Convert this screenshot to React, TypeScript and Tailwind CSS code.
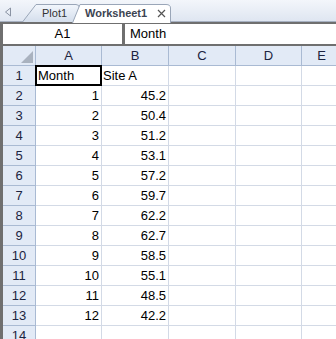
const values = [45.2, 50.4, 51.2, 53.1, 57.2, 59.7, 62.2, 62.7, 58.5, 55.1, 48.5, 42.2];

const cols = [
  { key: "A", w: "w-[66px]" },
  { key: "B", w: "w-[67px]" },
  { key: "C", w: "w-[67px]" },
  { key: "D", w: "w-[66px]" },
  { key: "E", w: "w-[40px]" },
];

const TabBar = () => (
  <div className="relative h-[22px] bg-gradient-to-b from-[#f3f6fb] to-[#dfe6f1] border-b border-[#a7b1c2]">
    <svg className="absolute left-[4px] top-[7px]" width="8" height="10" viewBox="0 0 8 10">
      <path d="M6.5 1 L1.5 5 L6.5 9 Z" fill="none" stroke="#8a93a3" strokeWidth="1" />
    </svg>
    <div className="absolute left-[22px] top-[4px] w-[60px] h-[18px]">
      <svg className="absolute inset-0" width="60" height="18" viewBox="0 0 60 18">
        <defs>
          <linearGradient id="plotg" x1="0" y1="0" x2="0" y2="1">
            <stop offset="0" stopColor="#f2f6fc" />
            <stop offset="1" stopColor="#d4deec" />
          </linearGradient>
        </defs>
        <path d="M0.5 18 L14 0.5 H54 Q57.5 0.5 57.5 4 V18" fill="url(#plotg)" stroke="#9aa6b8" />
      </svg>
      <span className="absolute left-[20px] top-[2px] text-[11px] leading-[14px] text-[#333]">Plot1</span>
    </div>
    <div className="absolute left-[72px] top-[4px] w-[99px] h-[19px]">
      <svg className="absolute inset-0" width="99" height="19" viewBox="0 0 99 19">
        <path d="M0.5 19 L8 0.5 H94 Q98.5 0.5 98.5 4 V19" fill="#ffffff" stroke="#9aa6b8" />
      </svg>
      <span className="absolute left-[13px] top-[2px] text-[11px] leading-[14px] font-bold text-[#3c4452]">Worksheet1</span>
      <svg className="absolute left-[85px] top-[5px]" width="9" height="9" viewBox="0 0 9 9">
        <path d="M1 1 L8 8 M8 1 L1 8" stroke="#555" strokeWidth="1.2" />
      </svg>
    </div>
  </div>
);

const FormulaBar = () => (
  <div className="flex h-[24px] bg-[#6f6f6f] pl-[3px] pt-[2px] pb-[2px] gap-[3px]">
    <div className="w-[119px] bg-white flex items-center justify-center text-[13px] text-black">A1</div>
    <div className="flex-1 bg-white flex items-center pl-[5px] text-[13px] text-black">Month</div>
  </div>
);

const HeaderRow = () => (
  <div className="flex h-[20px] bg-[#e2eaf6] border-b border-[#a9bad3]">
    <div className="relative w-[33px] shrink-0 border-r border-[#a9bad3]">
      <svg className="absolute right-[2px] bottom-[2px]" width="12" height="12" viewBox="0 0 12 12">
        <path d="M12 0 L12 12 L0 12 Z" fill="#a9b2bf" />
      </svg>
    </div>
    {cols.map((c) => (
      <div
        key={c.key}
        className={`${c.w} shrink-0 border-r border-[#a9bad3] flex items-center justify-center text-[13px] text-[#1c2440]`}
      >
        {c.key}
      </div>
    ))}
  </div>
);

const DataRow = ({ n, a, b }: { n: number; a: string; b: string }) => {
  const first = n === 1;
  return (
    <div className="flex h-[20px]">
      <div className="w-[33px] shrink-0 bg-[#e2eaf6] border-r border-b border-[#a9bad3] flex items-center justify-center text-[13px] text-[#1c2440]">
        {n}
      </div>
      <div
        className={
          first
            ? "w-[67px] shrink-0 border-2 border-black -ml-px -mt-px h-[21px] flex items-center pl-px text-[13px] text-black relative z-10"
            : "w-[66px] shrink-0 border-r border-b border-[#d3dae6] flex items-center justify-end pr-[2px] text-[13px] text-black"
        }
      >
        {a}
      </div>
      <div
        className={
          first
            ? "w-[67px] shrink-0 border-r border-b border-[#d3dae6] flex items-center pl-px text-[13px] text-black"
            : "w-[67px] shrink-0 border-r border-b border-[#d3dae6] flex items-center justify-end pr-[2px] text-[13px] text-black"
        }
      >
        {b}
      </div>
      <div className="w-[67px] shrink-0 border-r border-b border-[#d3dae6]" />
      <div className="w-[66px] shrink-0 border-r border-b border-[#d3dae6]" />
      <div className="w-[40px] shrink-0 border-r border-b border-[#d3dae6]" />
    </div>
  );
};

export default function App() {
  const rows = [
    { n: 1, a: "Month", b: "Site A" },
    ...values.map((v, i) => ({ n: i + 2, a: String(i + 1), b: v.toFixed(1) })),
    { n: 14, a: "", b: "" },
  ];
  return (
    <div
      className="w-[336px] h-[339px] overflow-hidden bg-white"
      style={{ fontFamily: '"Liberation Sans", Arial, sans-serif' }}
    >
      <TabBar />
      <FormulaBar />
      <div className="border-l-[3px] border-[#6f6f6f] h-full">
        <HeaderRow />
        {rows.map((r) => (
          <DataRow key={r.n} n={r.n} a={r.a} b={r.b} />
        ))}
      </div>
    </div>
  );
}
